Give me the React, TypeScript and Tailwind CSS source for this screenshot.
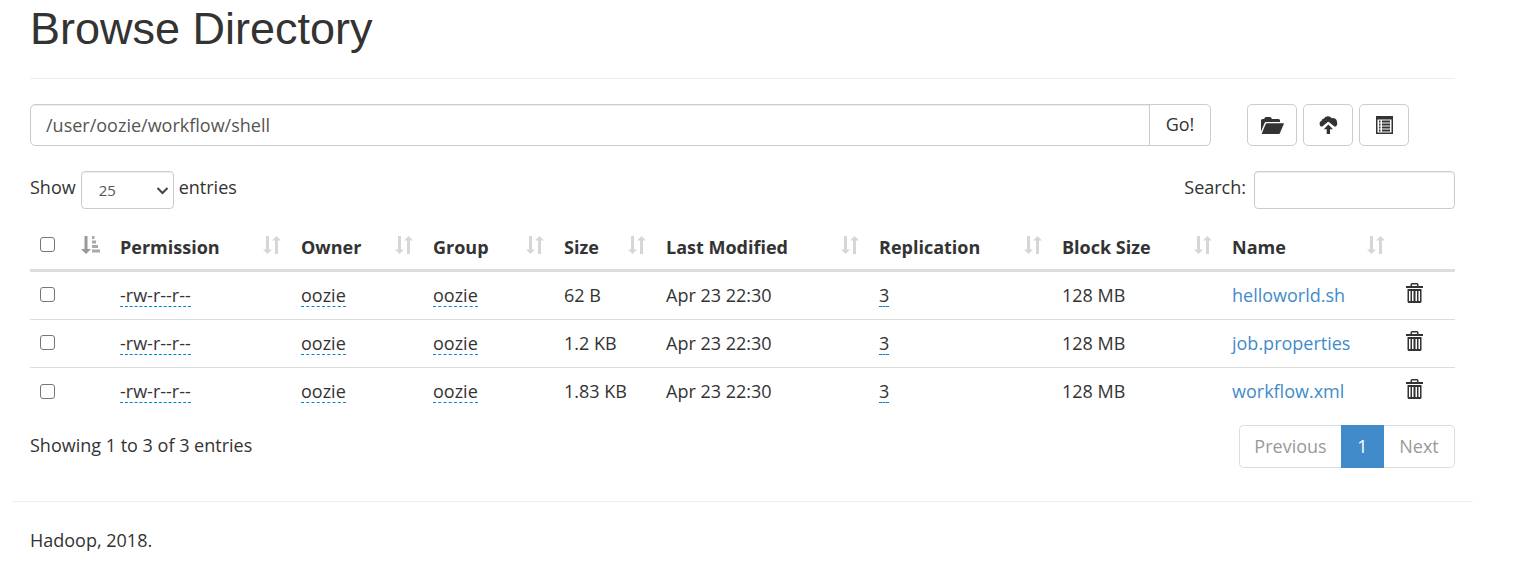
import React, { useState } from 'react';

interface FileEntry {
  permission: string;
  owner: string;
  group: string;
  size: string;
  modified: string;
  replication: number;
  blockSize: string;
  name: string;
}

const files: FileEntry[] = [
  { permission: '-rw-r--r--', owner: 'oozie', group: 'oozie', size: '62 B', modified: 'Apr 23 22:30', replication: 3, blockSize: '128 MB', name: 'helloworld.sh' },
  { permission: '-rw-r--r--', owner: 'oozie', group: 'oozie', size: '1.2 KB', modified: 'Apr 23 22:30', replication: 3, blockSize: '128 MB', name: 'job.properties' },
  { permission: '-rw-r--r--', owner: 'oozie', group: 'oozie', size: '1.83 KB', modified: 'Apr 23 22:30', replication: 3, blockSize: '128 MB', name: 'workflow.xml' },
];

const columns = [
  { label: 'Permission', width: 'w-[181px]' },
  { label: 'Owner', width: 'w-[132px]' },
  { label: 'Group', width: 'w-[131px]' },
  { label: 'Size', width: 'w-[102px]' },
  { label: 'Last Modified', width: 'w-[213px]' },
  { label: 'Replication', width: 'w-[183px]' },
  { label: 'Block Size', width: 'w-[170px]' },
  { label: 'Name', width: 'w-[173px]' },
];

const FolderOpenIcon = () => (
  <svg width="23" height="17" viewBox="0 0 23 17" fill="currentColor" aria-hidden="true">
    <path d="M0 3.5Q0 2 1.500 2H3L4 0.500Q4.300 0 5 0H9Q9.700 0 10 0.500L11 2H17.500Q19 2 19 3.500V5H5Q4 5 3.600 6L0 14.500Z" />
    <path d="M5.600 6.300H22.500Q23 6.300 22.800 6.900L18.900 16.300Q18.600 17 17.900 17H1.200Q0.600 17 0.800 16.400L4.700 6.900Q5 6.300 5.600 6.300Z" />
  </svg>
);

const CloudUploadIcon = () => (
  <svg width="19" height="18" viewBox="0 0 19 18" fill="currentColor" aria-hidden="true">
    <path d="M3 10.800A3.200 3.200 0 0 1 2.600 4.700A2.300 2.300 0 0 1 4.700 2.700A4.800 4.800 0 0 1 12.800 2.300A4 4 0 0 1 18 6A3.600 3.600 0 0 1 15.800 10.800L9.800 6Q9.300 5.600 8.800 6Z" />
    <path d="M9.300 8.500L14 13.300H11V18H7.700V13.300H4.800Z" />
  </svg>
);

const ListIcon = () => (
  <svg width="17" height="18" viewBox="0 0 17 18" fill="currentColor" aria-hidden="true">
    <path fillRule="evenodd" d="M0 0H17V18H0ZM1.500 3.500V16.500H15.500V3.500Z" />
    <path d="M3 4.500H4.500V6.500H3ZM3 7.500H4.500V9.500H3ZM3 10.500H4.500V12.500H3ZM3 13.500H4.500V15.500H3ZM6 4.500H14V6.500H6ZM6 7.500H14V9.500H6ZM6 10.500H14V12.500H6ZM6 13.500H14V15.500H6Z" />
  </svg>
);

const TrashIcon = () => (
  <svg width="17" height="20" viewBox="0 0 17 20" fill="currentColor" aria-hidden="true">
    <path d="M4.500 3V1.500Q4.500 0 6 0H11Q12.500 0 12.500 1.500V3H17V5H0V3ZM6 3H11V1.500H6Z" fillRule="evenodd" />
    <path fillRule="evenodd" d="M1.500 6H15.500V18.500Q15.500 20 14 20H3Q1.500 20 1.500 18.500ZM3 8V18H4.500V8ZM6 8V18H7.500V8ZM9.500 8V18H11V8ZM12.500 8V18H14V8Z" />
  </svg>
);

const SortIcon = () => (
  <svg className="shrink-0 text-[#d6d6d6]" width="18" height="18" viewBox="0 0 18 18" fill="currentColor" aria-hidden="true">
    <path d="M3 0H6V13.500H9L4.500 18L0 13.500H3Z" />
    <path d="M13.500 0L18 4.500H15V18H12V4.500H9Z" />
  </svg>
);

const SortAscIcon = () => (
  <svg className="text-[#999999]" width="19" height="18" viewBox="0 0 19 18" fill="currentColor" aria-hidden="true">
    <path d="M3.500 0H6.500V13H10L5 18L0 13H3.500Z" />
    <path d="M11 0H13.500V3H11ZM11 4.500H15V7.500H11ZM11 9H17V12H11ZM11 13.500H19V16.500H11Z" opacity="0.85" />
  </svg>
);

const Checkbox: React.FC<{ label: string }> = ({ label }) => (
  <input
    type="checkbox"
    aria-label={label}
    className="block size-[15px] appearance-none rounded-[3px] border border-[#767676] bg-white checked:bg-[#428bca]"
  />
);

const Editable: React.FC<{ children: React.ReactNode }> = ({ children }) => (
  <span className="inline-block h-[25px] cursor-pointer border-b border-dashed border-[#0088cc] align-top leading-[26px]">
    {children}
  </span>
);

const toolButton =
  'flex h-[42px] w-[50px] items-center justify-center rounded-[5px] border border-[#cccccc] bg-white';
const field = 'border border-[#cccccc] bg-white text-[#555555] shadow-[inset_0_1px_1px_rgba(0,0,0,0.075)] outline-none';
const headCell = 'border-b-3 border-[#dddddd] px-[10px] pb-[2px] font-bold whitespace-nowrap';
const bodyCell = 'border-b border-[#dddddd] px-[10px] pb-[2px] whitespace-nowrap group-last:border-b-0';

export default function App() {
  const [path, setPath] = useState('/user/oozie/workflow/shell');

  return (
    <div className="bg-white pr-16 pl-[30px] font-['Open_Sans','Noto_Sans',sans-serif] text-[18px] leading-[26px] text-[#333333]">
      <header className="border-b border-[#eeeeee] pt-1 pb-6">
        <h1 className="font-['Liberation_Sans',Arial,sans-serif] text-[45px] leading-[50px]">Browse Directory</h1>
      </header>

      <div className="mt-[25px] flex items-center gap-9 pr-[46px]">
        <form className="flex flex-1" onSubmit={(e) => e.preventDefault()}>
          <input
            type="text"
            aria-label="Directory"
            value={path}
            onChange={(e) => setPath(e.target.value)}
            className={`h-[42px] min-w-0 flex-1 rounded-l-[5px] px-[15px] ${field}`}
          />
          <button type="submit" className="-ml-px h-[42px] w-[62px] rounded-r-[5px] border border-[#cccccc] bg-white pb-[2px]">
            Go!
          </button>
        </form>
        <div className="flex gap-[6px]">
          <button type="button" aria-label="Create directory" className={toolButton}>
            <FolderOpenIcon />
          </button>
          <button type="button" aria-label="Upload files" className={toolButton}>
            <CloudUploadIcon />
          </button>
          <button type="button" aria-label="Cut and paste" className={toolButton}>
            <ListIcon />
          </button>
        </div>
      </div>

      <div className="mt-[25px] flex justify-between">
        <label className="flex gap-[5px] leading-8">
          Show
          <span className="relative">
            <select defaultValue="25" className={`block h-[38px] w-[93px] appearance-none rounded-[4px] pl-[17px] text-[15px] ${field}`}>
              <option>25</option>
              <option>50</option>
              <option>100</option>
            </select>
            <svg className="pointer-events-none absolute top-4 right-[5px]" width="13" height="8" viewBox="0 0 13 8" fill="none" stroke="#444444" strokeWidth="2" aria-hidden="true">
              <path d="M1.500 1L6.500 6L11.500 1" />
            </svg>
          </span>
          entries
        </label>
        <label className="flex gap-2 leading-8">
          Search:
          <input type="search" className={`h-[38px] w-[201px] rounded-[4px] px-3 text-[15px] ${field}`} />
        </label>
      </div>

      <table className="mt-[13px] w-full table-fixed border-separate border-spacing-0 text-left">
        <thead>
          <tr className="h-[50px]">
            <th className={`w-[80px] ${headCell}`}>
              <div className="flex items-center justify-between">
                <Checkbox label="Select all" />
                <SortAscIcon />
              </div>
            </th>
            {columns.map((column) => (
              <th key={column.label} className={`${headCell} ${column.width}`}>
                <div className="flex items-center justify-between">
                  <span className="pt-1">{column.label}</span>
                  <SortIcon />
                </div>
              </th>
            ))}
            <th className={`w-[60px] ${headCell}`} aria-label="Actions" />
          </tr>
        </thead>
        <tbody>
          {files.map((file) => (
            <tr key={file.name} className="group h-12">
              <td className={bodyCell}>
                <Checkbox label={`Select ${file.name}`} />
              </td>
              <td className={bodyCell}><Editable>{file.permission}</Editable></td>
              <td className={bodyCell}><Editable>{file.owner}</Editable></td>
              <td className={bodyCell}><Editable>{file.group}</Editable></td>
              <td className={bodyCell}>{file.size}</td>
              <td className={bodyCell}>{file.modified}</td>
              <td className={bodyCell}><Editable>{file.replication}</Editable></td>
              <td className={bodyCell}>{file.blockSize}</td>
              <td className={bodyCell}>
                <a href="#" className="text-[#428bca]">{file.name}</a>
              </td>
              <td className="border-b border-[#dddddd] pb-[6px] pl-[11px] group-last:border-b-0">
                <button type="button" aria-label={`Delete ${file.name}`} className="block">
                  <TrashIcon />
                </button>
              </td>
            </tr>
          ))}
        </tbody>
      </table>

      <div className="mt-[9px] flex justify-between">
        <p className="pt-[7px]">Showing 1 to 3 of 3 entries</p>
        <nav aria-label="Pages" className="flex h-[43px] text-[#999999]">
          <button type="button" className="w-[102px] rounded-l-[5px] border border-r-0 border-[#dddddd] pb-px">Previous</button>
          <button type="button" aria-current="page" className="w-[43px] bg-[#428bca] pb-px text-white">1</button>
          <button type="button" className="w-[71px] rounded-r-[5px] border border-l-0 border-[#dddddd] pb-px">Next</button>
        </nav>
      </div>

      <hr className="-mx-[18px] mt-[33px] border-[#eeeeee]" />
      <footer className="pt-[25px]">
        <p>Hadoop, 2018.</p>
      </footer>
    </div>
  );
}
